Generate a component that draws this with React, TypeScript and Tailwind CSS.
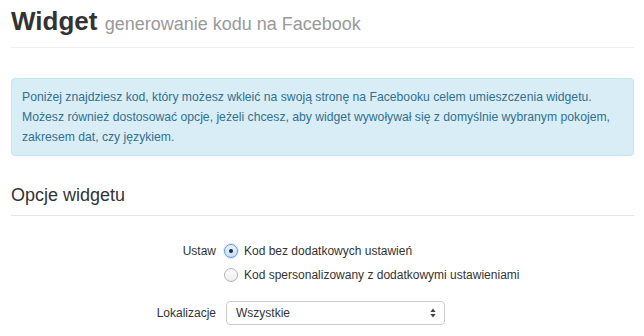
const OPTIONS = [
  { label: "Kod bez dodatkowych ustawień", checked: true },
  { label: "Kod spersonalizowany z dodatkowymi ustawieniami", checked: false },
];

function Radio({ checked }: { checked: boolean }) {
  if (checked) {
    return (
      <span className="flex h-[14px] w-[14px] shrink-0 items-center justify-center rounded-full border border-[#5a9ae0] bg-gradient-to-b from-[#eaf3fd] to-[#c9def7] shadow-[0_0_0_1px_rgba(120,170,230,0.25)]">
        <span className="h-[4px] w-[4px] rounded-full bg-[#1d2b3c]" />
      </span>
    );
  }
  return (
    <span className="h-[14px] w-[14px] shrink-0 rounded-full border border-[#b3b3b3] bg-gradient-to-b from-white to-[#ededed]" />
  );
}

export default function App() {
  return (
    <main className="min-h-screen bg-white font-['Liberation_Sans',Arial,sans-serif] text-[#333]">
      <div className="ml-[11px] w-[623px] pt-[7px]">
        <div className="border-b border-[#eeeeee] pb-[8px]">
          <h1 className="text-[26px] font-bold leading-[29px] text-[#333]">
            Widget{" "}
            <small className="text-[18px] font-normal text-[#999]">generowanie kodu na Facebook</small>
          </h1>
        </div>

        <div className="mt-[30px] rounded-[4px] border border-[#bce8f1] bg-[#d9edf7] px-[10px] py-[8px] text-[12.2px] leading-[20px] text-[#31708f]">
          <p className="whitespace-nowrap">
            Poniżej znajdziesz kod, który możesz wkleić na swoją stronę na Facebooku celem umieszczenia widgetu.
            <br />
            Możesz również dostosować opcje, jeżeli chcesz, aby widget wywoływał się z domyślnie wybranym pokojem,
            <br />
            zakresem dat, czy językiem.
          </p>
        </div>

        <h2 className="mt-[29px] border-b border-[#e5e5e5] pb-[10px] text-[18px] leading-[20px] text-[#333]">Opcje widgetu</h2>

        <form className="mt-[23px] text-[12px] text-[#333]">
          <div className="flex">
            <span className="w-[205px] text-right leading-[24px]">Ustaw</span>
            <div className="ml-[8px] flex flex-col">
              {OPTIONS.map((opt) => (
                <label key={opt.label} className="flex h-[24px] items-center gap-[6px]">
                  <Radio checked={opt.checked} />
                  <span>{opt.label}</span>
                </label>
              ))}
            </div>
          </div>

          <div className="mt-[14px] flex items-center">
            <span className="w-[205px] text-right">Lokalizacje</span>
            <div className="ml-[10px] flex h-[24px] w-[219px] items-center justify-between rounded-[4px] border border-[#cccccc] bg-white pl-[9px] pr-[8px]">
              <span>Wszystkie</span>
              <svg width="6" height="10" viewBox="0 0 6 10" className="text-[#444]">
                <path d="M3 0.5 L5.6 4 H0.4 Z" fill="currentColor" />
                <path d="M3 9.5 L5.6 6 H0.4 Z" fill="currentColor" />
              </svg>
            </div>
          </div>
        </form>
      </div>
    </main>
  );
}
